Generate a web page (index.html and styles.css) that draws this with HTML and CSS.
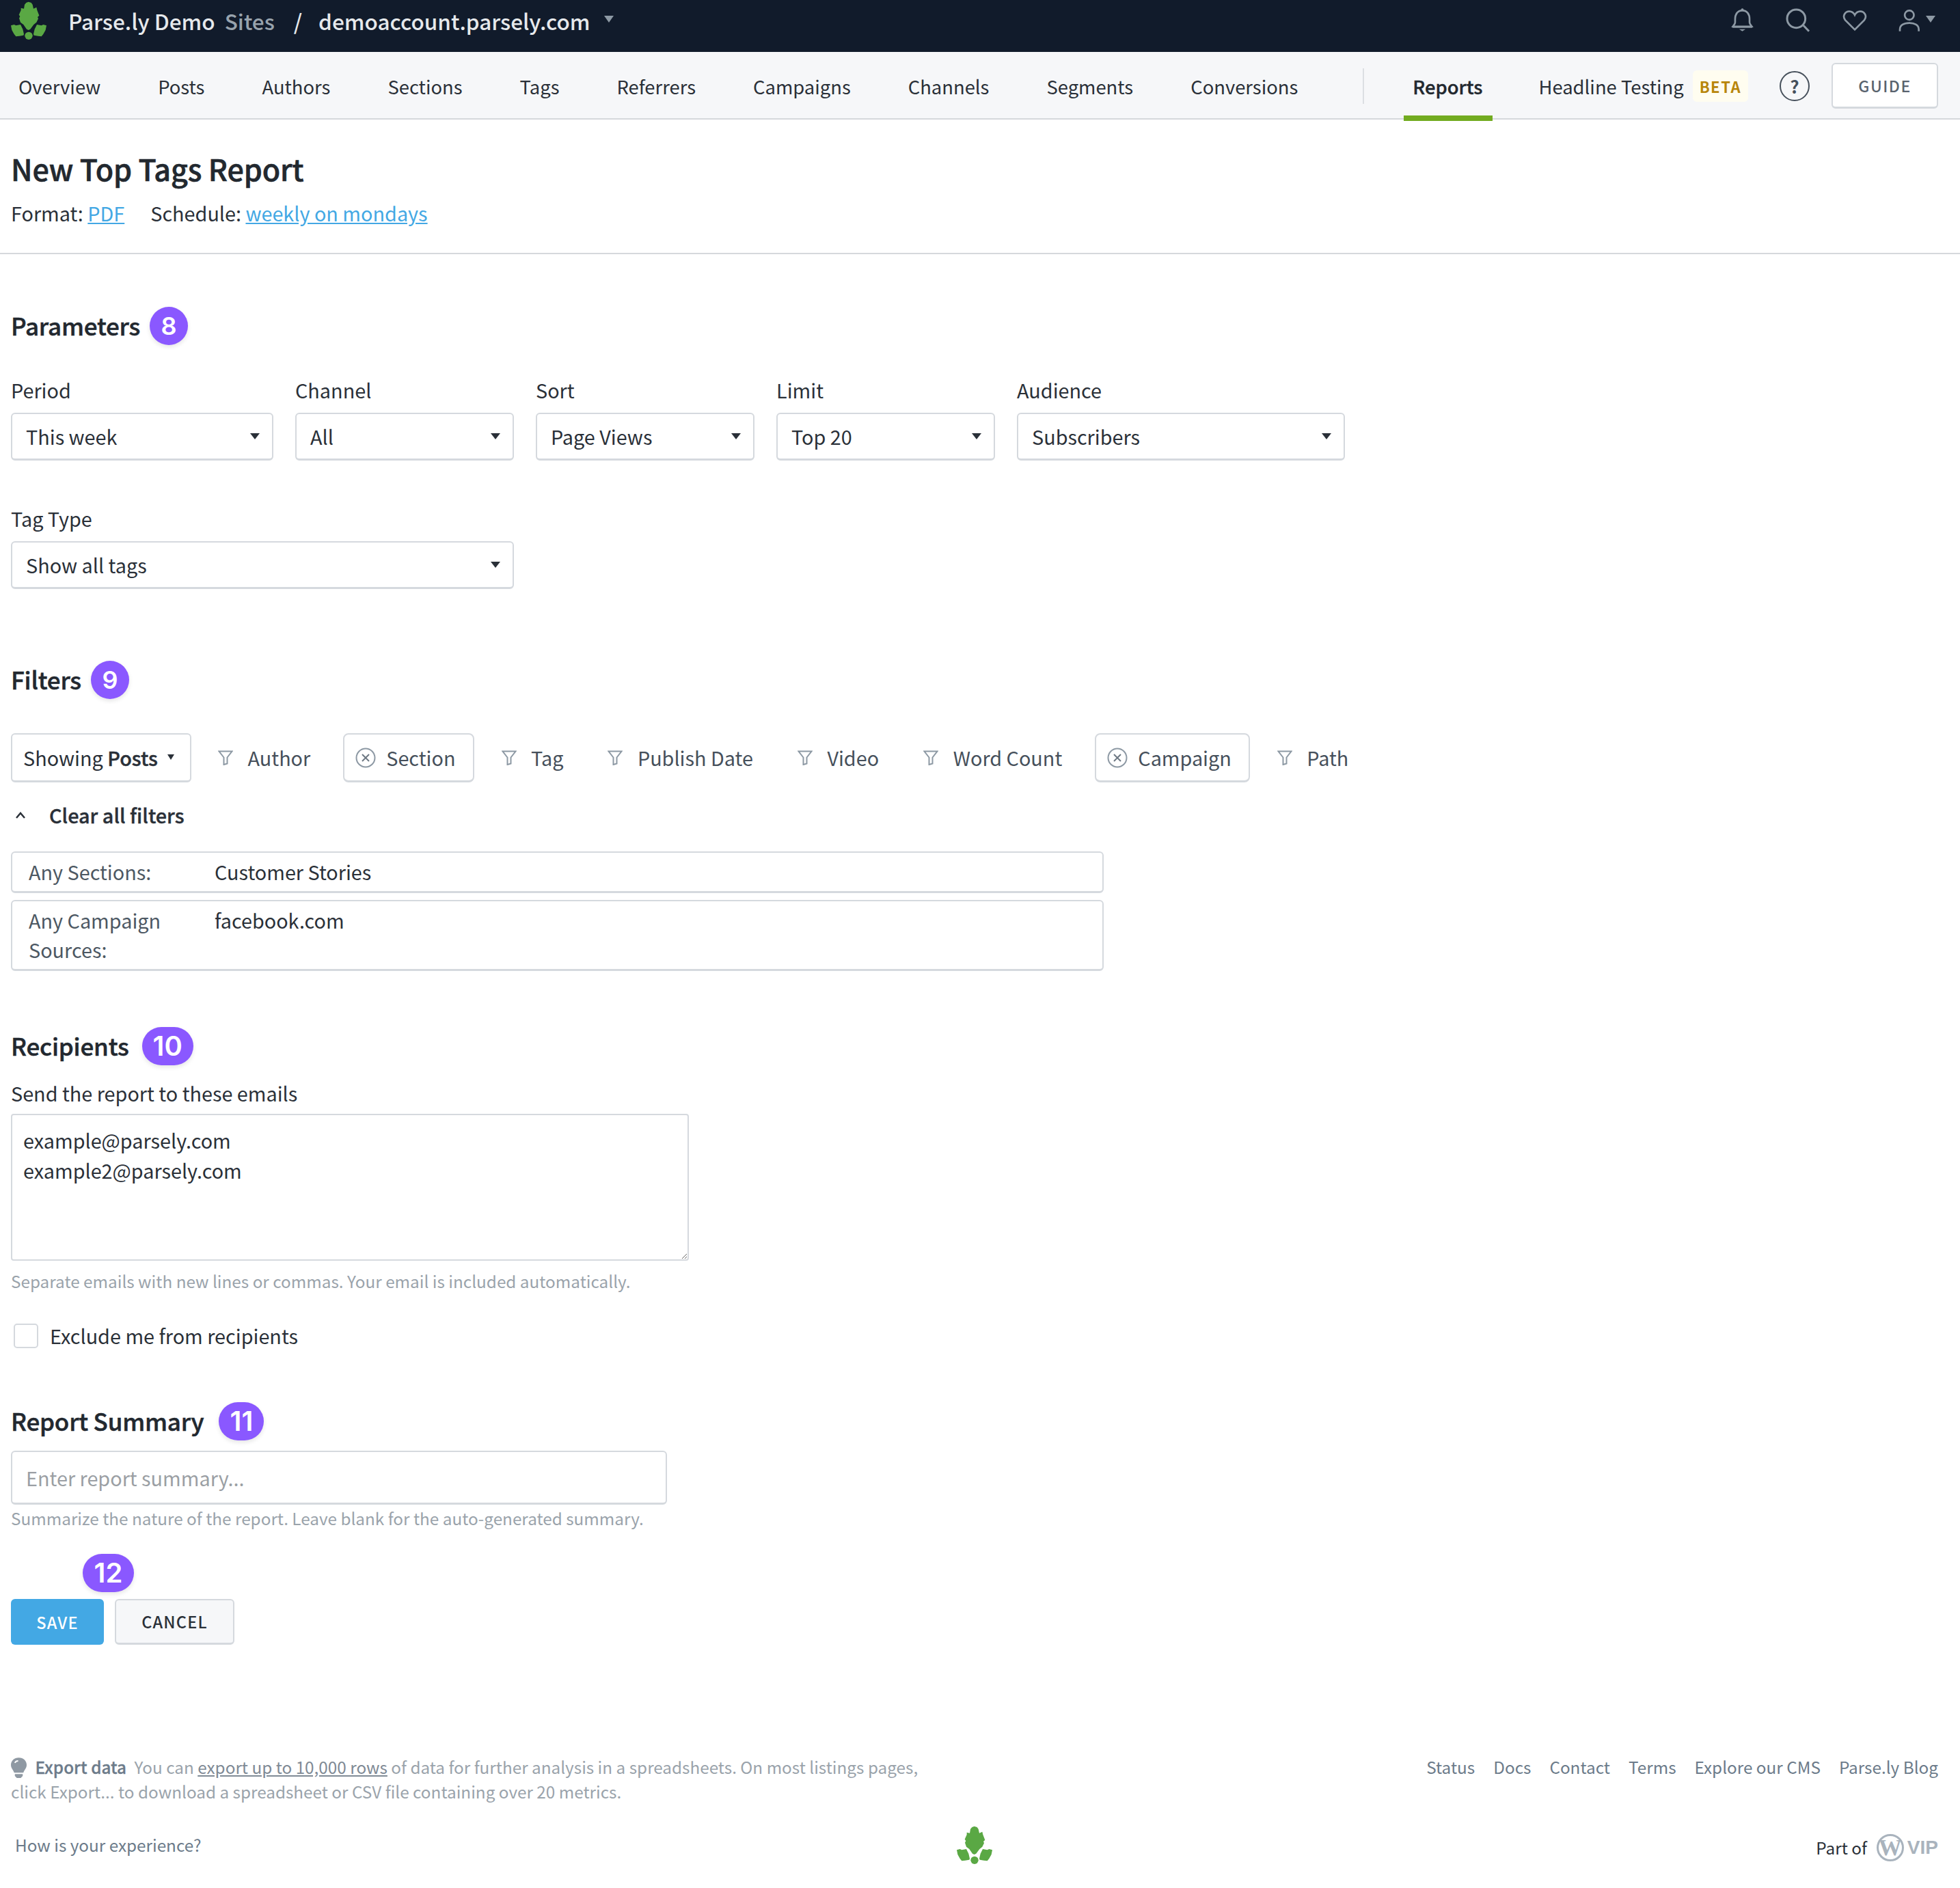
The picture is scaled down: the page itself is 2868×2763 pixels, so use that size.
FILE: index.html
```html
<!DOCTYPE html>
<html lang="en">
<head>
  <meta charset="UTF-8" />
  <title>New Top Tags Report</title>
  <link rel="stylesheet" href="styles.css">
</head>
<body>
  <header class="topbar">
    <svg class="leaf" viewBox="45 0 165 180"><path d="M125 8L137 12 143 20 147 38 160 32 163 45 172 68 165 75 168 82 160 98 148 108 133 128 125 132 117 128 103 108 90 98 84 80 88 72 83 65 92 45 92 35 105 38 108 20 115 12zM48 112L62 108 70 112 90 108 100 128 105 150 103 155 85 158 70 160 62 150 52 132zM204 112L190 108 182 112 162 108 152 128 147 150 149 155 167 158 182 160 190 150 200 132z" fill="#5aa844"/><circle cx="126" cy="157" r="17" fill="#5aa844"/></svg>
    <span class="brand">Parse.ly Demo</span>
    <span class="brand-sites">Sites</span>
    <span class="slash">/</span>
    <span class="domain">demoaccount.parsely.com</span>
    <span class="caret caret-grey domain-caret"></span>
    <div class="top-icons">
      <svg class="icon-bell" viewBox="40 35 100 110"><path d="M90 47c-22 0-32 18-32 38v15c0 8-6 12-10 18h84c-4-6-10-10-10-18V85c0-20-10-38-32-38zM46 120h88" fill="none" stroke="#8d99a4" stroke-width="8"/><path d="M76 130h28l-14 9z" fill="#8d99a4"/><circle cx="90" cy="44" r="6" fill="#8d99a4"/></svg>
      <svg class="icon-search" viewBox="275 30 114 111"><circle cx="324" cy="79" r="40" fill="none" stroke="#8d99a4" stroke-width="9"/><path d="M355 108l25 26" stroke="#8d99a4" stroke-width="9"/></svg>
      <svg class="icon-heart" viewBox="528 42 108 96"><path d="M582 130L540 88c-14-18 0-38 18-38 12 0 20 8 24 16 4-8 12-16 24-16 18 0 32 20 18 38z" fill="none" stroke="#8d99a4" stroke-width="8"/></svg>
      <div class="user-menu">
        <svg class="icon-user" viewBox="775 38 95 98"><circle cx="822" cy="65" r="20" fill="none" stroke="#8d99a4" stroke-width="8"/><path d="M781 135v-8c0-18 18-28 41-28s41 10 41 28v8" fill="none" stroke="#8d99a4" stroke-width="8"/></svg>
        <span class="caret caret-grey"></span>
      </div>
    </div>
  </header>

  <nav class="subnav">
    <a href="#">Overview</a>
    <a href="#">Posts</a>
    <a href="#">Authors</a>
    <a href="#">Sections</a>
    <a href="#">Tags</a>
    <a href="#">Referrers</a>
    <a href="#">Campaigns</a>
    <a href="#">Channels</a>
    <a href="#">Segments</a>
    <a href="#">Conversions</a>
    <span class="subnav-divider"></span>
    <a href="#" class="active">Reports</a>
    <a href="#" class="headline-link">Headline Testing</a>
    <span class="beta">BETA</span>
    <span class="help">?</span>
    <a href="#" class="guide">GUIDE</a>
  </nav>

  <div class="page-head">
    <h1>New Top Tags Report</h1>
    <p class="meta"><span>Format: <a href="#">PDF</a></span><span>Schedule: <a href="#">weekly on mondays</a></span></p>
  </div>

  <main class="content">
    <div class="section-title first">
      <h2>Parameters</h2><span class="badge">8</span>
    </div>
    <div class="field-row">
      <div class="field w-period">
        <label>Period</label>
        <div class="select">This week</div>
      </div>
      <div class="field w-small">
        <label>Channel</label>
        <div class="select">All</div>
      </div>
      <div class="field w-small">
        <label>Sort</label>
        <div class="select">Page Views</div>
      </div>
      <div class="field w-small">
        <label>Limit</label>
        <div class="select">Top 20</div>
      </div>
      <div class="field w-audience">
        <label>Audience</label>
        <div class="select">Subscribers</div>
      </div>
    </div>
    <div class="field-row second">
      <div class="field w-tagtype">
        <label>Tag Type</label>
        <div class="select">Show all tags</div>
      </div>
    </div>

    <div class="section-title filters-title">
      <h2>Filters</h2><span class="badge">9</span>
    </div>
    <div class="filter-row">
      <div class="showing">Showing <b>Posts</b><span class="caret caret-dark"></span></div>
      <div class="filter-item"><svg class="funnel" viewBox="0 0 22 22"><path d="M1.500 1.500h19l-7 9v9l-5 1.500V10.500z" fill="none" stroke="#8d99a4" stroke-width="2"/></svg>Author</div>
      <div class="filter-item on"><svg class="x-circle" viewBox="0 0 30 30"><circle cx="15" cy="15" r="13.500" fill="none" stroke="#8d99a4" stroke-width="2"/><path d="M10 10l10 10M20 10L10 20" stroke="#6d7883" stroke-width="2"/></svg>Section</div>
      <div class="filter-item"><svg class="funnel" viewBox="0 0 22 22"><path d="M1.500 1.500h19l-7 9v9l-5 1.500V10.500z" fill="none" stroke="#8d99a4" stroke-width="2"/></svg>Tag</div>
      <div class="filter-item"><svg class="funnel" viewBox="0 0 22 22"><path d="M1.500 1.500h19l-7 9v9l-5 1.500V10.500z" fill="none" stroke="#8d99a4" stroke-width="2"/></svg>Publish Date</div>
      <div class="filter-item"><svg class="funnel" viewBox="0 0 22 22"><path d="M1.500 1.500h19l-7 9v9l-5 1.500V10.500z" fill="none" stroke="#8d99a4" stroke-width="2"/></svg>Video</div>
      <div class="filter-item"><svg class="funnel" viewBox="0 0 22 22"><path d="M1.500 1.500h19l-7 9v9l-5 1.500V10.500z" fill="none" stroke="#8d99a4" stroke-width="2"/></svg>Word Count</div>
      <div class="filter-item on"><svg class="x-circle" viewBox="0 0 30 30"><circle cx="15" cy="15" r="13.500" fill="none" stroke="#8d99a4" stroke-width="2"/><path d="M10 10l10 10M20 10L10 20" stroke="#6d7883" stroke-width="2"/></svg>Campaign</div>
      <div class="filter-item"><svg class="funnel" viewBox="0 0 22 22"><path d="M1.500 1.500h19l-7 9v9l-5 1.500V10.500z" fill="none" stroke="#8d99a4" stroke-width="2"/></svg>Path</div>
    </div>
    <div class="clear-row">
      <svg class="chevron" viewBox="0 0 16 12"><path d="M2 10l6-7 6 7" fill="none" stroke="#2a3038" stroke-width="2.500"/></svg>
      <span>Clear all filters</span>
    </div>
    <div class="filter-box">
      <span class="filter-key">Any Sections:</span><span>Customer Stories</span>
    </div>
    <div class="filter-box">
      <span class="filter-key">Any Campaign<br>Sources:</span><span>facebook.com</span>
    </div>

    <div class="section-title recipients-title">
      <h2>Recipients</h2><span class="badge wide">10</span>
    </div>
    <label class="send-label">Send the report to these emails</label>
    <textarea class="emails">example@parsely.com
example2@parsely.com</textarea>
    <p class="hint hint-emails">Separate emails with new lines or commas. Your email is included automatically.</p>
    <label class="check-row"><input type="checkbox" />Exclude me from recipients</label>

    <div class="section-title summary-title">
      <h2>Report Summary</h2><span class="badge wide-sm">11</span>
    </div>
    <input class="summary" type="text" placeholder="Enter report summary..." />
    <p class="hint">Summarize the nature of the report. Leave blank for the auto-generated summary.</p>

    <div class="save-badge"><span class="badge wide">12</span></div>
    <div class="actions">
      <button class="btn btn-save">SAVE</button>
      <button class="btn btn-cancel">CANCEL</button>
    </div>
  </main>

  <footer class="footer">
    <div class="footer-top">
      <p class="tip">
        <svg class="bulb" viewBox="0 0 24 32"><path d="M12 0c7 0 12 5 12 11 0 5-3 7-5 12H5C3 18 0 16 0 11 0 5 5 0 12 0zM6 25h12v3l-3 3H9l-3-3z" fill="#8f99a3"/><path d="M6 8c1-2 3-3 5-3" fill="none" stroke="#fff" stroke-width="2"/></svg>
        <b>Export data</b> You can <a href="#">export up to 10,000 rows</a> of data for further analysis in a spreadsheets. On most listings pages,<br>click Export... to download a spreadsheet or CSV file containing over 20 metrics.
      </p>
      <div class="footer-links">
        <a href="#">Status</a>
        <a href="#">Docs</a>
        <a href="#">Contact</a>
        <a href="#">Terms</a>
        <a href="#">Explore our CMS</a>
        <a href="#">Parse.ly Blog</a>
      </div>
    </div>
    <div class="footer-bottom">
      <a href="#" class="experience">How is your experience?</a>
      <svg class="leaf-small" viewBox="45 0 165 180"><path d="M125 8L137 12 143 20 147 38 160 32 163 45 172 68 165 75 168 82 160 98 148 108 133 128 125 132 117 128 103 108 90 98 84 80 88 72 83 65 92 45 92 35 105 38 108 20 115 12zM48 112L62 108 70 112 90 108 100 128 105 150 103 155 85 158 70 160 62 150 52 132zM204 112L190 108 182 112 162 108 152 128 147 150 149 155 167 158 182 160 190 150 200 132z" fill="#5aa844"/><circle cx="126" cy="157" r="17" fill="#5aa844"/></svg>
      <div class="part-of">Part of <span class="wp-mark">W</span><span class="vip">VIP</span></div>
    </div>
  </footer>
</body>
</html>
```

FILE: styles.css
```css
* {
  margin: 0;
  padding: 0;
  box-sizing: border-box;
}

body {
  background: #fff;
  color: #2a3038;
  font-family: "Noto Sans CJK JP", "Noto Sans", sans-serif;
  font-size: 28.800px;
  line-height: 44px;
}

a {
  color: inherit;
  text-decoration: none;
}

.caret {
  display: inline-block;
  width: 0;
  height: 0;
  border-left: 7px solid transparent;
  border-right: 7px solid transparent;
}

.caret-grey {
  border-top: 10px solid #8d99a4;
}

.caret-dark {
  border-top: 8px solid #2a3038;
  border-left-width: 5px;
  border-right-width: 5px;
  margin-left: 14px;
  margin-bottom: 2px;
}

/* top bar */
.topbar {
  height: 76px;
  background: #111b2b;
  display: flex;
  align-items: center;
  padding: 0 36px 17px 15px;
  color: #e6e9ec;
  font-size: 31.500px;
  font-weight: 500;
}

.leaf {
  width: 55px;
  height: 60px;
  align-self: flex-start;
  margin-right: 30px;
  flex-shrink: 0;
}

.brand-sites {
  color: #98a3ad;
  margin-left: 14px;
}

.slash {
  margin-left: 28px;
  color: #e6e9ec;
}

.domain {
  margin-left: 24px;
}

.domain-caret {
  margin-left: 20px;
  margin-bottom: 4px;
}

.top-icons {
  margin-left: auto;
  align-self: flex-start;
  display: flex;
  align-items: center;
  gap: 46px;
  padding-top: 11px;
}

.icon-bell {
  width: 33px;
  height: 37px;
}

.icon-search {
  width: 38px;
  height: 37px;
}

.icon-heart {
  width: 36px;
  height: 32px;
}

.icon-user {
  width: 32px;
  height: 33px;
}

.user-menu {
  display: flex;
  align-items: center;
  gap: 8px;
}

.user-menu .caret {
  margin-bottom: 4px;
}

/* sub nav */
.subnav {
  height: 99px;
  background: #f6f7f9;
  border-bottom: 2px solid #d5d8dc;
  display: flex;
  align-items: center;
  padding: 2px 32px 0 27px;
  font-size: 27.400px;
}

.subnav a {
  margin-right: 84px;
  white-space: nowrap;
  flex-shrink: 0;
}

.subnav-divider {
  width: 2px;
  height: 52px;
  flex-shrink: 0;
  background: #dcdfe3;
  margin: 0 71px 0 11px;
}

.subnav a.active {
  font-weight: 500;
  -webkit-text-stroke: 0.400px;
  position: relative;
  margin-right: 82px;
  color: #22282f;
}

.subnav a.active::after {
  content: "";
  position: absolute;
  left: -13px;
  right: -15px;
  bottom: -29px;
  height: 8px;
  background: #72ab20;
}

.subnav a.headline-link {
  margin-right: 10px;
}

.beta {
  background: #fffdf0;
  color: #b8860b;
  font-size: 22px;
  font-weight: 600;
  letter-spacing: 1.500px;
  line-height: 46px;
  padding: 0 10px;
  border-radius: 6px;
  margin-right: 46px;
  margin-left: auto;
}

.help {
  width: 44px;
  height: 44px;
  flex-shrink: 0;
  border: 2px solid #46505b;
  border-radius: 50%;
  display: flex;
  align-items: center;
  justify-content: center;
  font-size: 26px;
  font-weight: 700;
  color: #46505b;
  margin-right: 32px;
}

.subnav a.guide {
  width: 156px;
  height: 67px;
  margin-right: 0;
  background: #fff;
  border: 2px solid #d5d9de;
  border-bottom-width: 3px;
  border-radius: 6px;
  display: flex;
  align-items: center;
  justify-content: center;
  font-size: 23px;
  font-weight: 500;
  letter-spacing: 1.500px;
  color: #59636e;
}

/* page heading */
.page-head {
  padding: 41px 16px 36px;
  border-bottom: 2px solid #d5d8dc;
}

h1 {
  font-size: 43px;
  letter-spacing: -0.100px;
  line-height: 60px;
  font-weight: 500;
  -webkit-text-stroke: 0.600px;
  color: #22282f;
}

.meta {
  margin-top: 14px;
  display: flex;
  gap: 38px;
}

.meta a {
  color: #43a8e4;
  text-decoration: underline;
}

.content {
  padding: 0 16px;
}

.section-title {
  display: flex;
  align-items: center;
  gap: 14px;
  height: 56px;
}

h2 {
  font-size: 35px;
  letter-spacing: -0.200px;
  font-weight: 500;
  -webkit-text-stroke: 0.500px;
  color: #22282f;
  margin-top: -3px;
}

.badge {
  min-width: 56px;
  height: 56px;
  border-radius: 28px;
  background: #8a58ff;
  color: #fff;
  font-family: Inter, "Liberation Sans", sans-serif;
  font-size: 36px;
  font-weight: 600;
  display: inline-flex;
  align-items: center;
  justify-content: center;
  box-shadow: 0 3px 6px rgba(0, 0, 0, 0.1);
}

.badge.wide {
  width: 75px;
  font-size: 40px;
}

.badge.wide-sm {
  width: 66px;
  font-size: 40px;
}

.section-title.first {
  margin-top: 77px;
}

.filters-title {
  margin-top: 105px;
}

.recipients-title {
  margin-top: 82px;
}

.recipients-title .badge {
  margin-left: 5px;
}

.summary-title {
  margin-top: 75px;
}

.summary-title .badge {
  margin-left: 8px;
}

/* parameter fields */
.field-row {
  display: flex;
  gap: 32px;
  margin-top: 44px;
}

.field-row.second {
  margin-top: 63px;
}

.field label {
  display: block;
  margin-bottom: 11px;
}

.w-period {
  width: 384px;
}

.w-small {
  width: 320px;
}

.w-audience {
  width: 480px;
}

.w-tagtype {
  width: 736px;
}

.select {
  position: relative;
  height: 70px;
  background: #fff;
  border: 2px solid #d5d9de;
  border-bottom-width: 3px;
  border-radius: 6px;
  padding: 0 20px;
  display: flex;
  align-items: center;
}

.select::after {
  content: "";
  position: absolute;
  right: 18px;
  top: 28px;
  border-left: 7px solid transparent;
  border-right: 7px solid transparent;
  border-top: 9px solid #2a3038;
}

/* filters */
.filter-row {
  display: flex;
  align-items: center;
  margin-top: 50px;
  height: 72px;
}

.showing {
  width: 264px;
  height: 72px;
  border: 2px solid #d5d9de;
  border-bottom-width: 3px;
  border-radius: 6px;
  padding-left: 16px;
  display: flex;
  align-items: center;
  white-space: pre;
}

.showing b {
  font-weight: 500;
  -webkit-text-stroke: 0.400px;
}

.filter-item {
  display: flex;
  align-items: center;
  height: 72px;
  padding: 0 26px 0 39px;
  color: #46505b;
  white-space: nowrap;
}

.filter-item.on {
  padding: 0 25px 0 16px;
  margin: 0 0 0 22px;
  border: 2px solid #d5d9de;
  border-bottom-width: 3px;
  border-radius: 8px;
}

.filter-item.on + .filter-item {
  padding-left: 40px;
}

.funnel {
  width: 22px;
  height: 22px;
  margin-right: 21.500px;
}

.x-circle {
  width: 30px;
  height: 30px;
  margin-right: 15px;
}

.clear-row {
  display: flex;
  align-items: center;
  margin-top: 26px;
  font-weight: 500;
  -webkit-text-stroke: 0.400px;
}

.chevron {
  width: 16px;
  height: 12px;
  margin-left: 6px;
  margin-right: 34px;
}

.filter-box {
  width: 1599px;
  display: flex;
  align-items: flex-start;
  margin-top: 10px;
  padding: 6px 24px 7px 24px;
  line-height: 43px;
  border: 2px solid #d5d9de;
  border-bottom-width: 3px;
  border-radius: 6px;
}

.clear-row + .filter-box {
  margin-top: 31px;
}

.filter-key {
  width: 272px;
  flex-shrink: 0;
  color: #4d5863;
}

/* recipients */
.send-label {
  display: block;
  margin-top: 19px;
}

.emails {
  display: block;
  width: 992px;
  height: 215px;
  margin-top: 8px;
  padding: 15px 16px;
  border: 2px solid #d5d9de;
  border-radius: 4px;
  font: inherit;
  color: inherit;
  line-height: 44px;
}

.hint {
  font-size: 24.300px;
  line-height: 40px;
  color: #9aa3ab;
}

.hint-emails {
  margin-top: 10px;
}

.check-row {
  display: flex;
  align-items: center;
  margin-top: 38px;
}

.check-row input {
  appearance: none;
  width: 36px;
  height: 36px;
  margin: 0 17px 0 4px;
  background: #fff;
  border: 2px solid #d5d9de;
  border-radius: 5px;
}

.summary {
  display: block;
  width: 960px;
  height: 79px;
  margin-top: 15px;
  padding: 0 20px;
  border: 2px solid #d5d9de;
  border-bottom-width: 3px;
  border-radius: 6px;
  font: inherit;
  color: inherit;
}

.summary::placeholder {
  color: #9b9fa4;
}

.save-badge {
  margin-top: 32px;
  padding-left: 105px;
  height: 57px;
}

.actions {
  display: flex;
  gap: 16px;
  margin-top: 9px;
}

.btn {
  height: 67px;
  border-radius: 6px;
  font-family: inherit;
  font-size: 23.500px;
  font-weight: 500;
  letter-spacing: 1.200px;
}

.btn-save {
  width: 136px;
  background: #43a8e4;
  border: none;
  color: #fff;
}

.btn-cancel {
  width: 175px;
  background: #f6f7f9;
  border: 2px solid #d5d9de;
  border-bottom-width: 3px;
  color: #2a3038;
}

/* footer */
.footer {
  margin-top: 161px;
  padding: 0 32px 0 16px;
  font-size: 24.300px;
  line-height: 36px;
  color: #9aa3ab;
}

.footer-top {
  display: flex;
  justify-content: space-between;
  align-items: flex-start;
}

.tip {
  width: 1360px;
}

.tip b {
  font-weight: 500;
  -webkit-text-stroke: 0.300px;
  color: #6c7b8a;
  margin-right: 6px;
}

.tip a {
  color: #7f8a95;
  text-decoration: underline;
}

.bulb {
  width: 23px;
  height: 31px;
  margin: -8px 7px -4px 0;
  vertical-align: -3px;
}

.footer-links {
  display: flex;
  gap: 27px;
  color: #6c7b8a;
}

.footer-bottom {
  display: grid;
  grid-template-columns: 1fr auto 1fr;
  align-items: center;
  margin-top: 30px;
}

.experience {
  color: #6c7b8a;
  padding-left: 6px;
}

.leaf-small {
  width: 55px;
  height: 60px;
}

.part-of {
  display: flex;
  align-items: center;
  justify-content: flex-end;
  color: #2a3038;
  margin-top: 8px;
}

.wp-mark {
  width: 40px;
  height: 40px;
  margin-left: 14px;
  border: 3px solid #a9b3bd;
  border-radius: 50%;
  display: flex;
  align-items: center;
  justify-content: center;
  font-family: "Liberation Serif", serif;
  font-size: 34px;
  font-weight: 700;
  color: #a9b3bd;
}

.vip {
  font-family: "Liberation Sans", sans-serif;
  font-size: 28px;
  font-weight: 700;
  color: #a9b3bd;
  margin-left: 5px;
}
```
